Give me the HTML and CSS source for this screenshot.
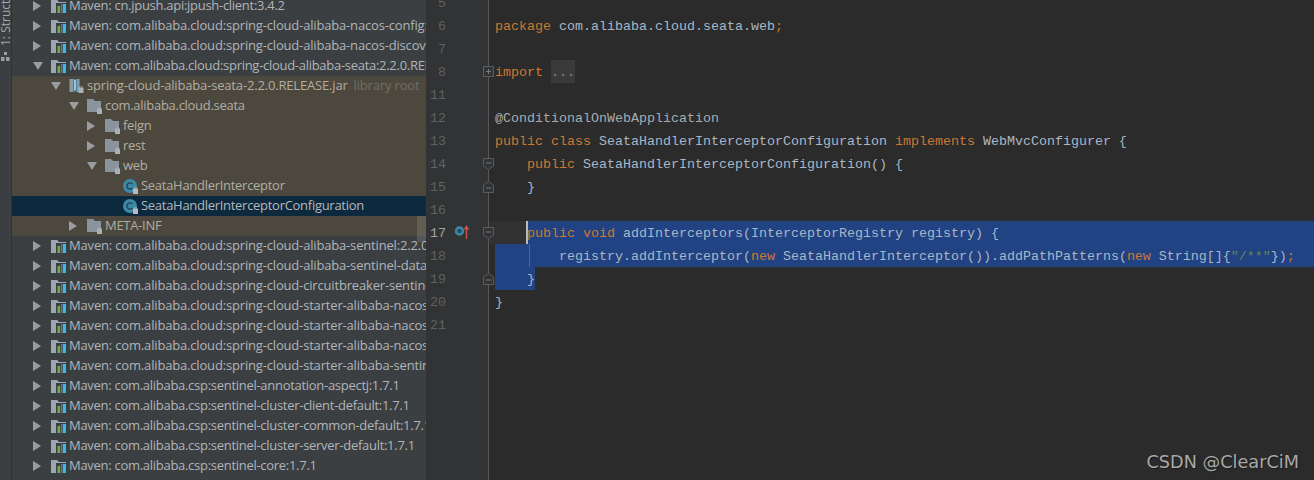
FILE: index.html
```html
<!DOCTYPE html>
<html lang="en">
<head>
<meta charset="utf-8">
<title>SeataHandlerInterceptorConfiguration</title>
<link rel="stylesheet" href="styles.css">
</head>
<body>
<svg class="defs" aria-hidden="true">
  <symbol id="lib" viewBox="0 0 15 13">
    <path d="M0 0h6l2 2h7v11H0z" fill="#9aa7b0"/>
    <rect x="5" y="3" width="10" height="10" fill="#3c3f41"/>
    <rect x="3.500" y="3" width="1.500" height="10" fill="#9aa7b0"/>
    <rect x="6.500" y="6" width="2.500" height="7" fill="#62b543"/>
    <rect x="9.800" y="4" width="1.400" height="9" fill="#6e7478"/>
    <rect x="11.800" y="4" width="3.200" height="9" fill="#40b6e0"/>
  </symbol>
  <symbol id="jar" viewBox="0 0 14 15">
    <rect x="0" y="0" width="10" height="13" fill="#8f9ba3"/>
    <rect x="3.500" y="0" width="4" height="13" fill="#3f7f9b"/>
    <path d="M4.500 1l2 1-2 1 2 1-2 1 2 1-2 1 2 1-2 1 2 1-2 1" fill="none" stroke="#b9d3df" stroke-width="1"/>
    <rect x="9" y="9" width="5" height="5" fill="#a9b1b7"/>
    <path d="M10 9.500V8h3v1.500" fill="none" stroke="#a9b1b7"/>
  </symbol>
  <symbol id="folder" viewBox="0 0 15 15">
    <path d="M0 0h6l2 2h6v11H0z" fill="#8b949c"/>
    <rect x="10" y="10" width="5" height="5" fill="#a9b1b7"/>
    <path d="M11 10.500V9h3v1.500" fill="none" stroke="#a9b1b7"/>
  </symbol>
  <symbol id="cls" viewBox="0 0 15 15">
    <circle cx="7" cy="7" r="7" fill="#3d8aa8"/>
    <path d="M9.500 5.200A3.100 3.100 0 1 0 9.500 8.800" fill="none" stroke="#24404e" stroke-width="1.400"/>
    <rect x="10" y="10" width="5" height="5" fill="#b4babf"/>
    <path d="M11 10.500V9h3v1.500" fill="none" stroke="#b4babf"/>
  </symbol>
  <symbol id="foldplus" viewBox="0 0 11 11">
    <rect x=".5" y=".5" width="10" height="10" fill="#313335" stroke="#5a5d5f"/>
    <path d="M3 5.500h5M5.500 3v5" stroke="#77797b"/>
  </symbol>
  <symbol id="folddown" viewBox="0 0 11 12">
    <path d="M.5.500h10v7.500l-5 3.500-5-3.500z" fill="#313335" stroke="#5a5d5f"/>
    <path d="M3 5h5" stroke="#77797b"/>
  </symbol>
  <symbol id="foldup" viewBox="0 0 11 12">
    <path d="M.5 11.500h10v-7.500l-5-3.500-5 3.500z" fill="#313335" stroke="#5a5d5f"/>
    <path d="M3 7h5" stroke="#77797b"/>
  </symbol>
</svg>

<aside class="rail">
  <span class="rail-label">1: Structure</span>
  <svg class="rail-icon" viewBox="0 0 10 10"><rect x="3" y="0" width="3" height="3" fill="#9a9da0"/><rect x="0" y="5" width="3.500" height="4" fill="#9a9da0"/><rect x="5" y="5" width="3.500" height="4" fill="#9a9da0"/></svg>
</aside>

<section class="tree">
  <div class="row l0"><i class="arrow"></i><svg class="ico"><use href="#lib"/></svg><span>Maven: cn.jpush.api:jpush-client:3.4.2</span></div>
  <div class="row l0 wide"><i class="arrow"></i><svg class="ico"><use href="#lib"/></svg><span>Maven: com.alibaba.cloud:spring-cloud-alibaba-nacos-config:2.2.0.RELEASE</span></div>
  <div class="row l0 wide"><i class="arrow"></i><svg class="ico"><use href="#lib"/></svg><span>Maven: com.alibaba.cloud:spring-cloud-alibaba-nacos-discovery:2.2.0.RELEASE</span></div>
  <div class="row l0"><i class="arrow open"></i><svg class="ico"><use href="#lib"/></svg><span>Maven: com.alibaba.cloud:spring-cloud-alibaba-seata:2.2.0.RELEASE</span></div>
  <div class="row l1 hl wide"><i class="arrow open"></i><svg class="ico jar"><use href="#jar"/></svg><span>spring-cloud-alibaba-seata-2.2.0.RELEASE.jar</span><span class="dim">library root</span></div>
  <div class="row l2 hl"><i class="arrow open"></i><svg class="ico"><use href="#folder"/></svg><span>com.alibaba.cloud.seata</span></div>
  <div class="row l3 hl"><i class="arrow"></i><svg class="ico"><use href="#folder"/></svg><span>feign</span></div>
  <div class="row l3 hl"><i class="arrow"></i><svg class="ico"><use href="#folder"/></svg><span>rest</span></div>
  <div class="row l3 hl"><i class="arrow open"></i><svg class="ico"><use href="#folder"/></svg><span>web</span></div>
  <div class="row l4 hl"><i class="arrow none"></i><svg class="ico"><use href="#cls"/></svg><span>SeataHandlerInterceptor</span></div>
  <div class="row l4 sel"><i class="arrow none"></i><svg class="ico"><use href="#cls"/></svg><span>SeataHandlerInterceptorConfiguration</span></div>
  <div class="row l2 hl"><i class="arrow"></i><svg class="ico"><use href="#folder"/></svg><span>META-INF</span></div>
  <div class="row l0 wide"><i class="arrow"></i><svg class="ico"><use href="#lib"/></svg><span>Maven: com.alibaba.cloud:spring-cloud-alibaba-sentinel:2.2.0.RELEASE</span></div>
  <div class="row l0 wide"><i class="arrow"></i><svg class="ico"><use href="#lib"/></svg><span>Maven: com.alibaba.cloud:spring-cloud-alibaba-sentinel-datasource:2.2.0.RELEASE</span></div>
  <div class="row l0 wide"><i class="arrow"></i><svg class="ico"><use href="#lib"/></svg><span>Maven: com.alibaba.cloud:spring-cloud-circuitbreaker-sentinel:2.2.0.RELEASE</span></div>
  <div class="row l0 wide"><i class="arrow"></i><svg class="ico"><use href="#lib"/></svg><span>Maven: com.alibaba.cloud:spring-cloud-starter-alibaba-nacos-config:2.2.0.RELEASE</span></div>
  <div class="row l0 wide"><i class="arrow"></i><svg class="ico"><use href="#lib"/></svg><span>Maven: com.alibaba.cloud:spring-cloud-starter-alibaba-nacos-discovery:2.2.0.RELEASE</span></div>
  <div class="row l0 wide"><i class="arrow"></i><svg class="ico"><use href="#lib"/></svg><span>Maven: com.alibaba.cloud:spring-cloud-starter-alibaba-nacos-seata:2.2.0.RELEASE</span></div>
  <div class="row l0 wide"><i class="arrow"></i><svg class="ico"><use href="#lib"/></svg><span>Maven: com.alibaba.cloud:spring-cloud-starter-alibaba-sentinel:2.2.0.RELEASE</span></div>
  <div class="row l0"><i class="arrow"></i><svg class="ico"><use href="#lib"/></svg><span>Maven: com.alibaba.csp:sentinel-annotation-aspectj:1.7.1</span></div>
  <div class="row l0"><i class="arrow"></i><svg class="ico"><use href="#lib"/></svg><span>Maven: com.alibaba.csp:sentinel-cluster-client-default:1.7.1</span></div>
  <div class="row l0"><i class="arrow"></i><svg class="ico"><use href="#lib"/></svg><span>Maven: com.alibaba.csp:sentinel-cluster-common-default:1.7.1</span></div>
  <div class="row l0"><i class="arrow"></i><svg class="ico"><use href="#lib"/></svg><span>Maven: com.alibaba.csp:sentinel-cluster-server-default:1.7.1</span></div>
  <div class="row l0"><i class="arrow"></i><svg class="ico"><use href="#lib"/></svg><span>Maven: com.alibaba.csp:sentinel-core:1.7.1</span></div>
  <div class="thumb"></div>
</section>

<main class="editor">
  <div class="line"><div class="gut">5</div><div class="code"></div></div>
  <div class="line"><div class="gut">6</div><div class="code"><span class="k">package</span> com.alibaba.cloud.seata.web<span class="k">;</span></div></div>
  <div class="line"><div class="gut">7</div><div class="code"></div></div>
  <div class="line"><div class="gut">8<svg class="fold"><use href="#foldplus"/></svg></div><div class="code"><span class="k">import</span> <span class="folded">...</span></div></div>
  <div class="line"><div class="gut">11</div><div class="code"></div></div>
  <div class="line"><div class="gut">12</div><div class="code"><span class="a">@ConditionalOnWebApplication</span></div></div>
  <div class="line"><div class="gut">13</div><div class="code"><span class="k">public class</span> SeataHandlerInterceptorConfiguration <span class="k">implements</span> WebMvcConfigurer {</div></div>
  <div class="line"><div class="gut">14<svg class="fold tall"><use href="#folddown"/></svg></div><div class="code">    <span class="k">public</span> SeataHandlerInterceptorConfiguration() {</div></div>
  <div class="line"><div class="gut">15<svg class="fold tall"><use href="#foldup"/></svg></div><div class="code">    }</div></div>
  <div class="line"><div class="gut">16</div><div class="code"></div></div>
  <div class="line cur">
    <div class="gut"><svg class="mark" viewBox="0 0 14 14"><circle cx="4.500" cy="6" r="3.500" fill="#1f5064" stroke="#3d8aa8" stroke-width="2.400"/><path d="M11.500 14V1.500M9.500 4.500l2-3 2 3" fill="none" stroke="#c75450" stroke-width="1.400"/></svg>17<svg class="fold tall"><use href="#folddown"/></svg></div>
    <div class="code caret-line"><div class="sel-rest"><span class="k">public void</span> addInterceptors(InterceptorRegistry registry) {</div></div>
  </div>
  <div class="line"><div class="gut">18</div><div class="code"><div class="sel-full"><span class="guide"></span>        registry.addInterceptor(<span class="k">new</span> SeataHandlerInterceptor()).addPathPatterns(<span class="k">new</span> String[]{<span class="s">"/**"</span>})<span class="k">;</span></div></div></div>
  <div class="line"><div class="gut">19<svg class="fold tall"><use href="#foldup"/></svg></div><div class="code"><span class="sel-part">    }</span></div></div>
  <div class="line"><div class="gut">20</div><div class="code">}</div></div>
  <div class="line"><div class="gut">21</div><div class="code"></div></div>
  <div class="line fill"><div class="gut"></div><div class="code"></div></div>
</main>

<div class="watermark">CSDN @ClearCiM</div>
</body>
</html>
```
FILE: styles.css
```css
* { box-sizing: border-box; }
html, body { height: 100%; }
body {
  margin: 0;
  height: 480px;
  overflow: hidden;
  display: flex;
  align-items: flex-start;
  background: #2b2b2b;
  position: relative;
}
.defs { position: absolute; width: 0; height: 0; }

.rail {
  width: 12px;
  height: 480px;
  flex: none;
  background: #3c3f41;
  border-right: 1px solid #323232;
  overflow: hidden;
  display: flex;
  flex-direction: column;
  align-items: center;
  justify-content: flex-start;
}
.rail-label {
  writing-mode: vertical-rl;
  transform: rotate(180deg);
  font: 12px/11px "Open Sans", sans-serif;
  color: #a4a7aa;
  white-space: nowrap;
  height: 46px;
  flex: none;
  text-align: left;
  width: 11px;
}
.rail-icon { width: 10px; height: 10px; flex: none; margin-top: 6px; margin-left: 1px; }

.tree {
  width: 414px;
  height: 484px;
  flex: none;
  margin-top: -4px;
  background: #3c3f41;
  overflow: hidden;
  position: relative;
  font: 13px/20px "Open Sans", sans-serif;
  letter-spacing: -.285px;
  color: #afb5ba;
}
.row {
  height: 20px;
  display: flex;
  align-items: center;
  white-space: nowrap;
  overflow: hidden;
}
.row span { margin-bottom: 2px; }
.wide { letter-spacing: -.17px; }
.l0 { padding-left: 21px; }
.l1 { padding-left: 39px; }
.l2 { padding-left: 57px; }
.l3 { padding-left: 75px; }
.l4 { padding-left: 93px; }
.hl { background: #4d483d; color: #b0aea4; }
.sel { background: #0d293e; color: #b4b8ba; }
.dim { color: #6f6e68; margin-left: 6px; }
.arrow {
  width: 18px;
  height: 10px;
  flex: none;
  display: block;
}
.arrow::before {
  content: "";
  display: block;
  width: 0;
  height: 0;
  border-style: solid;
  border-width: 5px 0 5px 8px;
  border-color: transparent transparent transparent #9a9da0;
}
.arrow.open::before {
  border-width: 8px 5px 0 5px;
  border-color: #9a9da0 transparent transparent transparent;
  margin-top: 1px;
}
.arrow.none::before { display: none; }
.ico { width: 15px; height: 15px; flex: none; margin-right: 3px; }
.thumb {
  position: absolute;
  right: 0;
  top: 220px;
  width: 9px;
  height: 26px;
  background: rgba(255, 255, 255, .12);
}

.editor {
  flex: 1;
  height: 489px;
  margin-top: -9px;
  display: flex;
  flex-direction: column;
  font: 13.333px/25px "Liberation Mono", monospace;
  color: #a9b7c6;
  min-width: 0;
}
.line { display: flex; height: 23px; flex: none; }
.line.fill { flex: 1; }
.gut {
  width: 63px;
  flex: none;
  background: #313335;
  border-right: 1px solid #555758;
  color: #5f6264;
  text-align: right;
  padding-right: 42px;
  position: relative;
}
.cur .gut { color: #a4a3a3; }
.code {
  flex: 1;
  min-width: 0;
  padding-left: 6px;
  white-space: pre;
  overflow: hidden;
}
.caret-line { background: #323232; padding-left: 38px; }
.sel-rest {
  background: #214283;
  height: 23px;
  border-left: 2px solid #bbbbbb;
  margin-left: -1px;
  text-indent: -1px;
}
.sel-full { background: #214283; height: 23px; position: relative; }
.sel-part { display: inline-block; background: #214283; height: 23px; vertical-align: top; }
.guide { position: absolute; left: 34px; top: 0; width: 1px; height: 23px; background: #4e6591; }
.k { color: #cc7832; }
.a { color: #a5adb3; }
.s { color: #6a8759; }
.folded { display: inline-block; background: #3a3a3a; color: #8a8a8a; height: 23px; vertical-align: top; }
.fold { position: absolute; right: -6px; top: 6px; width: 11px; height: 11px; }
.fold.tall { height: 12px; }
.mark { position: absolute; left: 29px; top: 4px; width: 14px; height: 14px; }

.watermark {
  position: absolute;
  right: 15px;
  bottom: 7px;
  font: 17.7px/22px "DejaVu Sans", sans-serif;
  color: #a8a8a8;
  text-shadow: 1px 1px 1px rgba(0, 0, 0, .4);
  white-space: nowrap;
}
```
